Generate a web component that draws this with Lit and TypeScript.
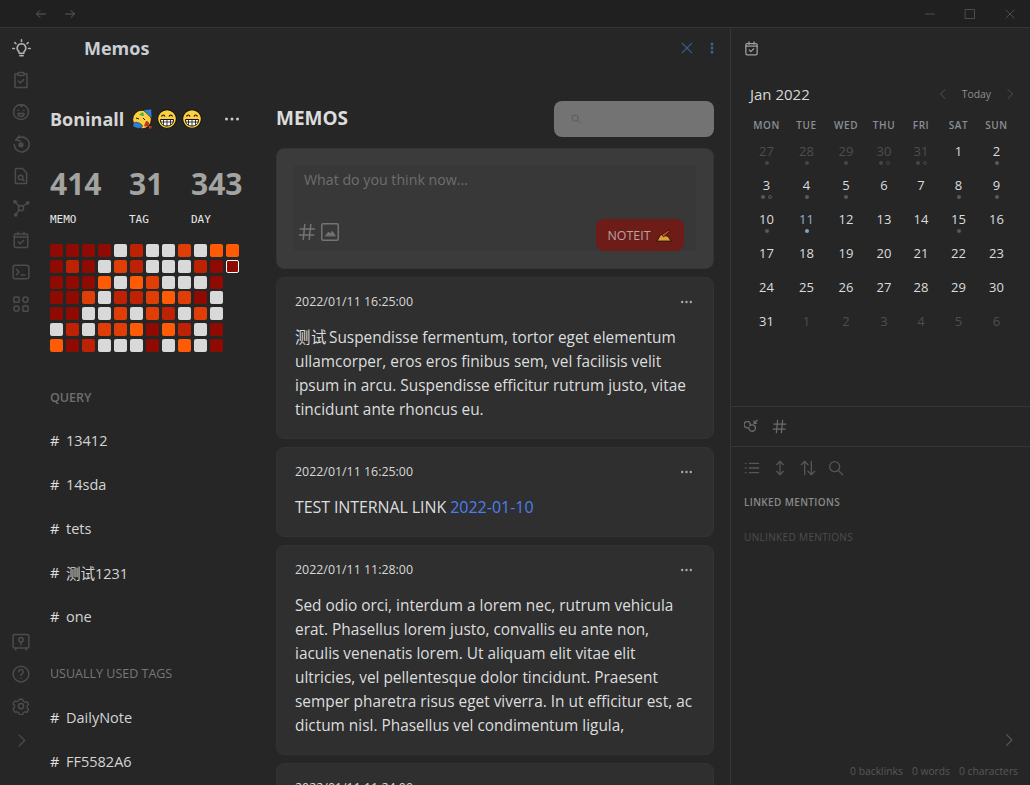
import { LitElement, html, css, svg } from "lit";
import { customElement } from "lit/decorators.js";

const ic = (body: unknown, size = 18, box = 24) => html`<svg
  width=${size}
  height=${size}
  viewBox="0 0 ${box} ${box}"
  fill="none"
  stroke="currentColor"
  stroke-width="2"
  stroke-linecap="round"
  stroke-linejoin="round"
>
  ${body}
</svg>`;

const icons = {
  bulb: svg`<path d="M9 18h6M10 21h4M12 6a5.500 5.500 0 0 0-3.500 9.700c.5.5.5 1 .5 2.300h6c0-1.300 0-1.800.5-2.300A5.500 5.500 0 0 0 12 6z"/><path d="M12 1v2M3.500 4.500l1.500 1.500M20.500 4.500L19 6M1 12h2M21 12h2"/>`,
  clipboard: svg`<path d="M8 4H4v18h16V4h-4"/><rect x="8" y="2" width="8" height="4" rx="1"/><path d="M8.500 13.500l2.500 2.500 4.500-4.500"/>`,
  face: svg`<circle cx="12" cy="12" r="10"/><path d="M8 14a4 4 0 0 0 8 0z"/><path d="M8 9.500h.5M15.500 9.500h.5M11 3c1 2 3 2 3 0"/>`,
  rotate: svg`<path d="M5 6.500A10 10 0 1 1 3 13"/><path d="M10 1L5.500 6.500 11 8"/><circle cx="12" cy="13" r="2.500" fill="currentColor"/>`,
  docsearch: svg`<path d="M14 2H6a1.500 1.500 0 0 0-1.500 1.500v17A1.500 1.500 0 0 0 6 22h12a1.500 1.500 0 0 0 1.500-1.500V8z"/><circle cx="11.500" cy="14" r="3"/><path d="M14 16.500l2 2"/>`,
  graph: svg`<circle cx="12" cy="12" r="3.500"/><circle cx="4" cy="3.500" r="1.500" fill="currentColor"/><circle cx="21" cy="5" r="1.500" fill="currentColor"/><circle cx="5" cy="21" r="1.500" fill="currentColor"/><path d="M5 5l5 5M19.500 6l-5 4M6 19.500l3.500-5"/>`,
  calendar: svg`<rect x="3" y="4" width="18" height="18" rx="2"/><path d="M8 1.500V5M16 1.500V5M3 8h18"/><path d="M8.500 14.500l2.500 2.500 4.500-4.500"/>`,
  terminal: svg`<rect x="1.500" y="3" width="21" height="18" rx="3"/><path d="M6 8.500l3.500 3.500L6 15.500M12 16h5"/>`,
  grid: svg`<rect x="2.500" y="2.500" width="7" height="7" rx="1"/><circle cx="18" cy="6" r="3.500"/><circle cx="6" cy="18" r="3.500"/><rect x="14.500" y="14.500" width="7" height="7" rx="1"/>`,
  vault: svg`<rect x="1.500" y="2" width="21" height="18" rx="2"/><circle cx="12" cy="9" r="3"/><path d="M12 12v4M5 20v2.500M19 20v2.500"/>`,
  help: svg`<circle cx="12" cy="12" r="10.500"/><path d="M9 9a3 3 0 1 1 4.500 2.600c-1 .6-1.500 1.200-1.500 2.400M12 17.500v.1"/>`,
  gear: svg`<circle cx="12" cy="12" r="3.500"/><path d="M9.500 2h5l.7 3 2.700 1.500 3-.9 2.400 4.300-2.200 2.100v3l2.200 2.100-2.400 4.300-3-.9-2.700 1.500-.7 3h-5l-.7-3-2.700-1.500-3 .9L.2 16.100l2.200-2.100v-3L.2 8.900l2.400-4.300 3 .9 2.700-1.500z" transform="translate(1.200 1.200) scale(.9)"/>`,
  chevronRight: svg`<path d="M8 3l9 9-9 9"/>`,
  chevronLeft: svg`<path d="M16 3l-9 9 9 9"/>`,
  arrowLeft: svg`<path d="M21 12H3M10 5l-7 7 7 7"/>`,
  arrowRight: svg`<path d="M3 12h18M14 5l7 7-7 7"/>`,
  close: svg`<path d="M4 4l16 16M20 4L4 20"/>`,
  hash: svg`<path d="M9 2L7 22M17 2l-2 20M3 8h19M2 16h19"/>`,
  image: svg`<rect x="1" y="1" width="22" height="22" rx="2"/><path d="M6 17l4-5 2.500 2.500L15 11l4 6z" fill="currentColor" stroke-width="1"/>`,
  search: svg`<circle cx="10" cy="10" r="7.500"/><path d="M16 16l6 6"/>`,
  linkBack: svg`<path d="M10 8.500A5 5 0 1 0 5 14h3M9 11a4.500 4.500 0 0 1 4-1.500 5 5 0 0 1 2.500 9.500A5 5 0 0 1 8 14"/><path d="M21 2l-5 5M16 3v4h4"/>`,
  list: svg`<path d="M8 5h14M8 12h14M8 19h14M2 5h1M2 12h1M2 19h1"/>`,
  expand: svg`<path d="M12 2v20M7 7l5-5 5 5M7 17l5 5 5-5"/>`,
  sort: svg`<path d="M7 22V2M2 7l5-5 5 5M17 2v20M12 17l5 5 5-5"/>`,
};

const emoji = {
  party: svg`<circle cx="10" cy="10.500" r="9.300" fill="#fbd043" stroke="#1c1405" stroke-width=".8"/><path d="M1 15c2-2.500 4-2 7-.5s3 3.500 1 4.500-6 0-8-1.500z" fill="#2f7fd1" stroke="#1c1405" stroke-width=".5"/><path d="M11 1l8.500-1 .5 9.500z" fill="#2f7fd1" stroke="#1c1405" stroke-width=".5"/><path d="M7 6l4-3 1 4z" fill="#3fb04b"/><path d="M14 12c2 0 3 1 3 3s-3 3-5 2" fill="#c8321f"/><path d="M4 9l3 1M11 9l2 2" stroke="#1c1405" stroke-width="1"/><rect x="17" y="17" width="2.500" height="2.500" fill="#d8302a"/>`,
  grin: svg`<circle cx="10" cy="10" r="9.400" fill="#fbd043" stroke="#15110a" stroke-width="1.100"/><path d="M3.500 10.500h13c0 4.500-2.800 6.500-6.500 6.500s-6.500-2-6.500-6.500z" fill="#fff" stroke="#15110a"/><path d="M3.800 13h12.400M6.500 11v5M10 11v6M13.500 11v5" stroke="#15110a" stroke-width=".8"/><path d="M4.500 7.500c.8-2 2.700-2 3.500 0M12 7.500c.8-2 2.700-2 3.500 0" stroke="#15110a" stroke-width="1.200" fill="none"/>`,
  hand: svg`<path d="M2 14l4-7 8 2 3 5z" fill="#d9a13b" stroke="#2a1608" stroke-width="1"/><path d="M7 7l8-5 1 1.500-7 6z" fill="#c8452f" stroke="#2a1608" stroke-width=".8"/>`,
};

const heat = [
  "aaaagbggcgdd",
  "abagcbgggbas",
  "aaadgdcggga.",
  "aacgbbcdcag.",
  "aaggcgcbgcg.",
  "gbgccdadbga.",
  "dabgggagdga.",
];

const dayRows: [string, string][][] = [
  [["27", "o a"], ["28", "o a"], ["29", "o a"], ["30", "o ar"], ["31", "o ar"], ["1", ""], ["2", "a"]],
  [["3", "ar"], ["4", "a"], ["5", "a"], ["6", ""], ["7", ""], ["8", "a"], ["9", "a"]],
  [["10", "a"], ["11", "t"], ["12", ""], ["13", ""], ["14", ""], ["15", "a"], ["16", ""]],
  [["17", ""], ["18", ""], ["19", ""], ["20", ""], ["21", ""], ["22", ""], ["23", ""]],
  [["24", ""], ["25", ""], ["26", ""], ["27", ""], ["28", ""], ["29", ""], ["30", ""]],
  [["31", ""], ["1", "o"], ["2", "o"], ["3", "o"], ["4", "o"], ["5", "o"], ["6", "o"]],
];

const query = ["13412", "14sda", "tets", "测试1231", "one"];
const tags = ["DailyNote", "FF5582A6"];

const memos = [
  {
    time: "2022/01/11 16:25:00",
    cls: "",
    body: html`<span class="cjk">测试</span> Suspendisse fermentum, tortor eget elementum ullamcorper, eros eros finibus sem, vel facilisis velit ipsum in arcu. Suspendisse efficitur rutrum justo, vitae tincidunt ante rhoncus eu.`,
  },
  {
    time: "2022/01/11 16:25:00",
    cls: "caps",
    body: html`TEST INTERNAL LINK <a>2022-01-10</a>`,
  },
  {
    time: "2022/01/11 11:28:00",
    cls: "",
    body: html`Sed odio orci, interdum a lorem nec, rutrum vehicula erat. Phasellus lorem justo, convallis eu ante non, iaculis venenatis lorem. Ut aliquam elit vitae elit ultricies, vel pellentesque dolor tincidunt. Praesent semper pharetra risus eget viverra. In ut efficitur est, ac dictum nisl. Phasellus vel condimentum ligula,`,
  },
  { time: "2022/01/11 11:24:00", cls: "", body: html`` },
];

@customElement("app-root")
class AppRoot extends LitElement {
  static styles = css`
    :host {
      display: block;
      width: 1030px;
      height: 785px;
      overflow: hidden;
      background: #262626;
      color: #dcddde;
      font-family: "Open Sans", "Noto Sans CJK SC", sans-serif;
      font-size: 16px;
    }
    svg {
      display: block;
    }
    .titlebar {
      height: 27px;
      background: #202020;
      border-bottom: 1px solid #363636;
      display: flex;
      align-items: center;
      color: #5a5a5a;
    }
    .nav {
      display: flex;
      gap: 17px;
      margin-left: 35px;
      flex: 1;
    }
    .win {
      display: flex;
      gap: 28px;
      margin-right: 14px;
      color: #4c4c4c;
    }
    .main {
      display: flex;
      height: 757px;
    }
    .ribbon {
      width: 40px;
      flex: none;
      display: flex;
      flex-direction: column;
      align-items: center;
      padding: 4px 0 0 2px;
      box-sizing: border-box;
      color: #4c4c4c;
    }
    .ribbon .slot {
      height: 32px;
      display: flex;
      align-items: center;
      justify-content: center;
    }
    .ribbon .first {
      color: #b0b0b0;
    }
    .ribbon .spacer {
      flex: 1;
    }
    .ribbon .bottom {
      margin-top: 2px;
      margin-bottom: 29px;
    }
    .center {
      width: 690px;
      flex: none;
      overflow: hidden;
    }
    .head {
      height: 40px;
      display: flex;
      align-items: center;
      padding: 0 16px 0 44px;
      color: #3e5f9e;
      gap: 16px;
    }
    .head h1 {
      margin: 0;
      flex: 1;
      font-size: 18px;
      font-weight: 700;
      color: #c8ced4;
    }
    .columns {
      display: flex;
      padding: 33px 16px 0 10px;
    }
    .side {
      width: 190px;
      margin-right: 36px;
      flex: none;
    }
    .user {
      display: flex;
      align-items: center;
      height: 36px;
      font-size: 18px;
      font-weight: 700;
      color: #d6d6d6;
      gap: 5px;
    }
    .user span {
      margin-right: 3px;
    }
    .user .dots {
      margin-left: auto;
      margin-right: 1px;
      color: #c8c8c8;
    }
    .stats {
      display: flex;
      margin-top: 27px;
    }
    .stat {
      flex: none;
    }
    .stat.first {
      width: 79px;
    }
    .stat.second {
      width: 62px;
    }
    .stat b {
      display: block;
      font-size: 30px;
      line-height: 40px;
      font-weight: 700;
      color: #a3a3a0;
    }
    .stat small {
      display: block;
      margin-top: 9px;
      font-family: "DejaVu Sans Mono", monospace;
      font-size: 11px;
      line-height: 14px;
      color: #e6e6e6;
    }
    .heat {
      display: grid;
      grid-template-columns: repeat(12, 13px);
      grid-auto-rows: 13px;
      column-gap: 3px;
      row-gap: 2.800px;
      margin-top: 17px;
    }
    .cell {
      border-radius: 2px;
    }
    .a, .s { background: #8f0a00; }
    .b { background: #bd2205; }
    .c { background: #e03e07; }
    .d { background: #ff5a05; }
    .g { background: #d9d9d9; }
    .s {
      box-sizing: border-box;
      border: 1px solid #fff;
    }
    .side h3 {
      margin: 0;
      font-size: 12.500px;
      font-weight: 600;
      color: #6f6f6f;
      line-height: 20px;
    }
    .side h3.q {
      margin-top: 36px;
    }
    .side h3.u {
      margin-top: 25px;
      font-weight: 400;
      color: #777;
    }
    .tag {
      height: 44px;
      display: flex;
      align-items: center;
      font-size: 14.500px;
      color: #d4d4d4;
    }
    .tag i {
      font-style: normal;
      width: 16px;
      color: #e0e0e0;
    }
    .q + .tag {
      margin-top: 11px;
    }
    .u + .tag {
      margin-top: 12px;
    }
    .feed {
      width: 438px;
      flex: none;
    }
    .bar {
      display: flex;
      align-items: center;
      justify-content: space-between;
      height: 36px;
    }
    .bar h2 {
      margin: 0 0 2px;
      font-size: 19px;
      font-weight: 700;
      color: #dcdcdc;
    }
    .find {
      width: 160px;
      height: 36px;
      background: #737373;
      border-radius: 8px;
      display: flex;
      align-items: center;
      padding-left: 17px;
      box-sizing: border-box;
      color: #565656;
    }
    .editor {
      margin-top: 11px;
      height: 121px;
      box-sizing: border-box;
      background: #3b3b3b;
      border: 1px solid #343434;
      border-radius: 8px;
      padding: 16px 17px;
    }
    .inner {
      height: 86px;
      background: #383838;
      padding: 0 12px 0 10px;
      box-sizing: border-box;
      font-size: 14.200px;
      color: #6e6e6e;
      display: flex;
      flex-direction: column;
    }
    .inner p {
      margin: 5px 0 0;
      line-height: 20px;
    }
    .tools {
      margin-top: auto;
      display: flex;
      align-items: flex-end;
      color: #747474;
      margin-left: -6px;
      gap: 5px;
    }
    .tools .pics {
      display: flex;
      gap: 5px;
      padding-bottom: 10px;
    }
    .btn {
      margin-left: auto;
      width: 88px;
      height: 32px;
      background: #6e1c17;
      border-radius: 8px;
      color: #b5a5a3;
      font-size: 12.400px;
      display: flex;
      align-items: center;
      justify-content: center;
      gap: 6px;
    }
    .memo {
      margin-top: 8px;
      background: #2f2f2f;
      border: 1px solid #333;
      border-radius: 8px;
      padding: 12px 18px 16px;
      line-height: 24px;
      color: #dcddde;
    }
    .memo .meta {
      display: flex;
      align-items: center;
      justify-content: space-between;
      font-size: 12.400px;
      margin-bottom: 12px;
      color: #d8d8d8;
    }
    .memo .more {
      margin-right: 3px;
      color: #aaa;
    }
    .memo .body {
      font-size: 15.400px;
    }
    .memo .body.caps {
      font-size: 16px;
      letter-spacing: -0.1px;
      margin: -1px 0 1px;
    }
    .memo .cjk {
      letter-spacing: 0.6px;
      margin-right: -2px;
    }
    .memo a {
      color: #4d7ef0;
      letter-spacing: 0;
    }
    .right {
      width: 300px;
      flex: none;
      border-left: 1px solid #363636;
      box-sizing: border-box;
      display: flex;
      flex-direction: column;
      color: #5c5c5c;
    }
    .tab {
      height: 40px;
      padding-left: 13px;
      display: flex;
      align-items: center;
      color: #a0a0a0;
    }
    .month {
      display: flex;
      align-items: center;
      margin-top: 12px;
      height: 28px;
      padding: 0 14px 0 19px;
      font-size: 15px;
      color: #d8d8d8;
    }
    .month span {
      flex: 1;
    }
    .month em {
      font-style: normal;
      font-size: 10.400px;
      color: #8a9096;
      margin: 0 13px;
    }
    .month svg {
      color: #505050;
    }
    .cal {
      display: grid;
      grid-template-columns: 39px 41px 38px 38px 36px 39px 37px;
      padding-left: 16px;
      margin-top: 7px;
    }
    .dow {
      text-align: center;
      font-size: 10px;
      font-weight: 600;
      letter-spacing: 0.6px;
      line-height: 20px;
      color: #8a8f94;
      margin-bottom: 6px;
    }
    .day {
      height: 34px;
      text-align: center;
      font-size: 13px;
      line-height: 20px;
      color: #dcddde;
    }
    .day.o {
      color: #4e4e4e;
    }
    .day.t {
      color: #8fb0cc;
    }
    .dots {
      display: flex;
      justify-content: center;
      gap: 3px;
      height: 4px;
    }
    .dot {
      width: 4px;
      height: 4px;
      border-radius: 50%;
      background: #5a5a5a;
    }
    .dot.r {
      background: none;
      box-sizing: border-box;
      border: 1px solid #5a5a5a;
    }
    .dot.t {
      background: #7fa6c4;
    }
    .day.o .dot {
      background: #464646;
    }
    .day.o .dot.r {
      background: none;
      border-color: #464646;
    }
    .links {
      margin-top: 61px;
      border-top: 1px solid #363636;
      border-bottom: 1px solid #363636;
      height: 41px;
      box-sizing: border-box;
      display: flex;
      align-items: center;
      gap: 13px;
      padding-left: 13px;
      color: #6c6c6c;
    }
    .actions {
      display: flex;
      align-items: center;
      gap: 12px;
      height: 42px;
      padding-left: 13px;
      color: #555;
    }
    .label {
      padding-left: 13px;
      font-size: 10px;
      font-weight: 600;
      letter-spacing: 0.35px;
      line-height: 14px;
      margin-top: 6px;
      color: #8a8a8a;
    }
    .label.off {
      margin-top: 21px;
      font-weight: 400;
      color: #4e4e4e;
    }
    .grow {
      flex: 1;
      display: flex;
      justify-content: flex-end;
      align-items: flex-end;
      padding: 0 14px 2px 0;
      color: #555;
    }
    .status {
      display: flex;
      justify-content: flex-end;
      gap: 9px;
      height: 36px;
      padding: 15px 12px 0 0;
      box-sizing: border-box;
      font-size: 10.300px;
      color: #585858;
    }
  `;

  private dots3(small = false) {
    const w = small ? 11 : 14;
    const r = small ? 1.2 : 1.5;
    return html`<svg width=${w} height="4" viewBox="0 0 ${w} 4" fill="currentColor">
      <circle cx=${r} cy="2" r=${r} /><circle cx=${w / 2} cy="2" r=${r} /><circle cx=${w - r} cy="2" r=${r} />
    </svg>`;
  }

  private renderRibbon() {
    const top = [icons.clipboard, icons.face, icons.rotate, icons.docsearch, icons.graph, icons.calendar, icons.terminal, icons.grid];
    const low = [icons.vault, icons.help, icons.gear];
    return html`<nav class="ribbon">
      <div class="slot first">${ic(icons.bulb, 19)}</div>
      ${top.map((i) => html`<div class="slot">${ic(i, 18)}</div>`)}
      <div class="spacer"></div>
      ${low.map((i) => html`<div class="slot">${ic(i, 18)}</div>`)}
      <div class="slot bottom">${ic(icons.chevronRight, 15)}</div>
    </nav>`;
  }

  private renderSide() {
    return html`<aside class="side">
      <div class="user">
        <span>Boninall</span>
        <svg width="20" height="20" viewBox="0 0 20 20">${emoji.party}</svg>
        <svg width="20" height="20" viewBox="0 0 20 20">${emoji.grin}</svg>
        <svg width="20" height="20" viewBox="0 0 20 20">${emoji.grin}</svg>
        <div class="dots">${this.dots3()}</div>
      </div>
      <div class="stats">
        <div class="stat first"><b>414</b><small>MEMO</small></div>
        <div class="stat second"><b>31</b><small>TAG</small></div>
        <div class="stat"><b>343</b><small>DAY</small></div>
      </div>
      <div class="heat">
        ${heat.flatMap((row) =>
          [...row].map((c) => html`<div class="cell ${c === "." ? "" : c}"></div>`)
        )}
      </div>
      <h3 class="q">QUERY</h3>
      ${query.map((t) => html`<div class="tag"><i>#</i>${t}</div>`)}
      <h3 class="u">USUALLY USED TAGS</h3>
      ${tags.map((t) => html`<div class="tag"><i>#</i>${t}</div>`)}
    </aside>`;
  }

  private renderFeed() {
    return html`<section class="feed">
      <div class="bar">
        <h2>MEMOS</h2>
        <div class="find">${ic(icons.search, 10)}</div>
      </div>
      <div class="editor">
        <div class="inner">
          <p>What do you think now...</p>
          <div class="tools">
            <div class="pics">${ic(icons.hash, 18)}${ic(icons.image, 18)}</div>
            <div class="btn">
              NOTEIT
              <svg width="16" height="13" viewBox="1 1 17 14">${emoji.hand}</svg>
            </div>
          </div>
        </div>
      </div>
      ${memos.map(
        (m) => html`<article class="memo">
          <div class="meta"><span>${m.time}</span><span class="more">${this.dots3(true)}</span></div>
          <div class="body ${m.cls}">${m.body}</div>
        </article>`
      )}
    </section>`;
  }

  private renderRight() {
    const names = ["MON", "TUE", "WED", "THU", "FRI", "SAT", "SUN"];
    return html`<aside class="right">
      <div class="tab">${ic(icons.calendar, 15)}</div>
      <div class="month">
        <span>Jan 2022</span>
        ${ic(icons.chevronLeft, 12)}
        <em>Today</em>
        ${ic(icons.chevronRight, 12)}
      </div>
      <div class="cal">
        ${names.map((n) => html`<div class="dow">${n}</div>`)}
        ${dayRows.flat().map(([d, f]) => {
          const flags = f.split(" ");
          const kind = flags.pop() ?? "";
          const old = flags[0] === "o" || f === "o";
          return html`<div class="day ${old ? "o" : ""} ${kind === "t" ? "t" : ""}">
            ${d}
            <div class="dots">
              ${kind.includes("a") || kind === "t"
                ? html`<div class="dot ${kind === "t" ? "t" : ""}"></div>`
                : ""}
              ${kind.includes("r") ? html`<div class="dot r"></div>` : ""}
            </div>
          </div>`;
        })}
      </div>
      <div class="links">${ic(icons.linkBack, 15)}${ic(icons.hash, 15)}</div>
      <div class="actions">
        ${ic(icons.list, 16)}${ic(icons.expand, 16)}${ic(icons.sort, 16)}${ic(icons.search, 16)}
      </div>
      <div class="label">LINKED MENTIONS</div>
      <div class="label off">UNLINKED MENTIONS</div>
      <div class="grow">${ic(icons.chevronRight, 14)}</div>
      <div class="status">
        <span>0 backlinks</span><span>0 words</span><span>0 characters</span>
      </div>
    </aside>`;
  }

  render() {
    return html`
      <header class="titlebar">
        <div class="nav">${ic(icons.arrowLeft, 12)}${ic(icons.arrowRight, 12)}</div>
        <div class="win">
          ${ic(svg`<path d="M3 12h18"/>`, 12)}${ic(svg`<rect x="3" y="3" width="18" height="18"/>`, 12)}${ic(icons.close, 12)}
        </div>
      </header>
      <div class="main">
        ${this.renderRibbon()}
        <div class="center">
          <div class="head">
            <h1>Memos</h1>
            ${ic(icons.close, 14)}
            <svg width="4" height="12" viewBox="0 0 4 12" fill="currentColor">
              <circle cx="2" cy="2" r="1.500" /><circle cx="2" cy="6" r="1.500" /><circle cx="2" cy="10" r="1.500" />
            </svg>
          </div>
          <div class="columns">${this.renderSide()}${this.renderFeed()}</div>
        </div>
        ${this.renderRight()}
      </div>
    `;
  }
}

export default AppRoot;
